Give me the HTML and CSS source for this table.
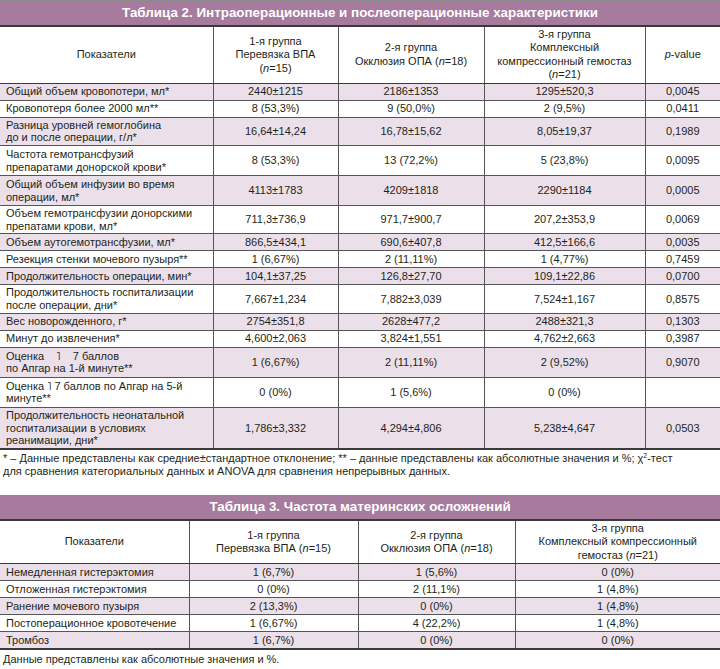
FILE: index.html
```html
<!DOCTYPE html>
<html lang="ru">
<head>
<meta charset="utf-8">
<title>Таблицы</title>
<link rel="stylesheet" href="styles.css">
</head>
<body>
<table class="tbl t2">
  <colgroup><col class="c1"><col class="c2"><col class="c3"><col class="c4"><col class="c5"></colgroup>
  <thead>
    <tr><th class="cap" colspan="5">Таблица 2. Интраоперационные и послеоперационные характеристики</th></tr>
    <tr class="head">
      <th>Показатели</th>
      <th>1-я группа<br>Перевязка ВПА<br>(<i>n</i>=15)</th>
      <th>2-я группа<br>Окклюзия ОПА (<i>n</i>=18)</th>
      <th>3-я группа<br>Комплексный<br>компрессионный гемостаз<br>(<i>n</i>=21)</th>
      <th><i>p</i>-value</th>
    </tr>
  </thead>
  <tbody>
    <tr class="s"><td>Общий объем кровопотери, мл*</td><td>2440±1215</td><td>2186±1353</td><td>1295±520,3</td><td>0,0045</td></tr>
    <tr><td>Кровопотеря более 2000 мл**</td><td>8 (53,3%)</td><td>9 (50,0%)</td><td>2 (9,5%)</td><td>0,0411</td></tr>
    <tr class="s d1"><td>Разница уровней гемоглобина<br>до и после операции, г/л*</td><td>16,64±14,24</td><td>16,78±15,62</td><td>8,05±19,37</td><td>0,1989</td></tr>
    <tr class="d2"><td>Частота гемотрансфузий<br>препаратами донорской крови*</td><td>8 (53,3%)</td><td>13 (72,2%)</td><td>5 (23,8%)</td><td>0,0095</td></tr>
    <tr class="s d2"><td>Общий объем инфузии во время<br>операции, мл*</td><td>4113±1783</td><td>4209±1818</td><td>2290±1184</td><td>0,0005</td></tr>
    <tr class="d1"><td>Объем гемотрансфузии донорскими<br>препатами крови, мл*</td><td>711,3±736,9</td><td>971,7±900,7</td><td>207,2±353,9</td><td>0,0069</td></tr>
    <tr class="s"><td>Объем аутогемотрансфузии, мл*</td><td>866,5±434,1</td><td>690,6±407,8</td><td>412,5±166,6</td><td>0,0035</td></tr>
    <tr><td>Резекция стенки мочевого пузыря**</td><td>1 (6,67%)</td><td>2 (11,11%)</td><td>1 (4,77%)</td><td>0,7459</td></tr>
    <tr class="s"><td>Продолжительность операции, мин*</td><td>104,1±37,25</td><td>126,8±27,70</td><td>109,1±22,86</td><td>0,0700</td></tr>
    <tr class="d1"><td>Продолжительность госпитализации<br>после операции, дни*</td><td>7,667±1,234</td><td>7,882±3,039</td><td>7,524±1,167</td><td>0,8575</td></tr>
    <tr class="s"><td>Вес новорожденного, г*</td><td>2754±351,8</td><td>2628±477,2</td><td>2488±321,3</td><td>0,1303</td></tr>
    <tr><td>Минут до извлечения*</td><td>4,600±2,063</td><td>3,824±1,551</td><td>4,762±2,663</td><td>0,3987</td></tr>
    <tr class="s d2"><td>Оценка&nbsp;&nbsp;&nbsp;&nbsp;˥&nbsp;&nbsp;&nbsp;&nbsp;7 баллов<br>по Апгар на 1-й минуте**</td><td>1 (6,67%)</td><td>2 (11,11%)</td><td>2 (9,52%)</td><td>0,9070</td></tr>
    <tr class="d2"><td>Оценка ˥ 7 баллов по Апгар на 5-й<br>минуте**</td><td>0 (0%)</td><td>1 (5,6%)</td><td>0 (0%)</td><td></td></tr>
    <tr class="s"><td>Продолжительность неонатальной<br>госпитализации в условиях<br>реанимации, дни*</td><td>1,786±3,332</td><td>4,294±4,806</td><td>5,238±4,647</td><td>0,0503</td></tr>
  </tbody>
</table>
<p class="note">* – Данные представлены как средние±стандартное отклонение; ** – данные представлены как абсолютные значения и %; χ<sup>2</sup>-тест<br>для сравнения категориальных данных и ANOVA для сравнения непрерывных данных.</p>

<table class="tbl t3">
  <colgroup><col class="k1"><col class="k2"><col class="k3"><col class="k4"></colgroup>
  <thead>
    <tr><th class="cap" colspan="4">Таблица 3. Частота материнских осложнений</th></tr>
    <tr class="head">
      <th>Показатели</th>
      <th>1-я группа<br>Перевязка ВПА (<i>n</i>=15)</th>
      <th>2-я группа<br>Окклюзия ОПА (<i>n</i>=18)</th>
      <th>3-я группа<br>Комплексный компрессионный<br>гемостаз (<i>n</i>=21)</th>
    </tr>
  </thead>
  <tbody>
    <tr class="s"><td>Немедленная гистерэктомия</td><td>1 (6,7%)</td><td>1 (5,6%)</td><td>0 (0%)</td></tr>
    <tr><td>Отложенная гистерэктомия</td><td>0 (0%)</td><td>2 (11,1%)</td><td>1 (4,8%)</td></tr>
    <tr class="s"><td>Ранение мочевого пузыря</td><td>2 (13,3%)</td><td>0 (0%)</td><td>1 (4,8%)</td></tr>
    <tr><td>Постоперационное кровотечение</td><td>1 (6,67%)</td><td>4 (22,2%)</td><td>1 (4,8%)</td></tr>
    <tr class="s"><td>Тромбоз</td><td>1 (6,7%)</td><td>0 (0%)</td><td>0 (0%)</td></tr>
  </tbody>
</table>
<p class="note">Данные представлены как абсолютные значения и %.</p>
</body>
</html>
```

FILE: styles.css
```css
html, body {
  margin: 0;
  padding: 0;
  background: #ffffff;
}
body {
  width: 720px;
  font-family: "Liberation Sans", Arial, sans-serif;
  font-size: 11px;
  color: #231f20;
}
.tbl {
  width: 720px;
  border-collapse: collapse;
  table-layout: fixed;
}
.t2 .c1 { width: 213px; }
.t2 .c2 { width: 125px; }
.t2 .c3 { width: 146px; }
.t2 .c4 { width: 161px; }
.t2 .c5 { width: 75px; }
.t3 .k1 { width: 189px; }
.t3 .k2 { width: 169px; }
.t3 .k3 { width: 157px; }
.t3 .k4 { width: 205px; }

.tbl th,
.tbl td {
  border: 1px solid #555456;
  padding: 1px 4px;
  line-height: 12.7px;
  text-align: center;
  vertical-align: middle;
  font-weight: normal;
}
.tbl td:first-child {
  text-align: left;
  padding-left: 6px;
  border-left: none;
}
.tbl th:first-child { border-left: none; }
.tbl td:last-child,
.tbl th:last-child { border-right: none; }

.tbl th.cap {
  background: #a67b9e;
  color: #ffffff;
  font-weight: bold;
  font-size: 13.4px;
  height: 24px;
  padding: 0;
  border-top: 1px solid #8c8c8c;
  border-bottom: 2px solid #3a3a3a;
  border-left: none;
  border-right: none;
}
.t3 th.cap { height: 23px; }
.tbl .head th {
  line-height: 13.4px;
  padding: 1px 4px;
  border-bottom: 1px solid #3a3a3a;
}
.t2 .head th { height: 53px; }
.t3 .head th { height: 40px; }

.tbl tr.s td { background: #ebe0ea; }
.t2 tbody td { height: 14px; }
.t2 tr.d1 td { height: 24px; }
.t2 tr.d2 td { height: 27px; }
.t3 tbody td { height: 14px; }
.tbl tbody tr:last-child td { border-bottom: 2px solid #3a3a3a; }

.note {
  margin: 2px 0 0;
  padding-left: 3px;
  line-height: 13.5px;
}
.note sup {
  font-size: 7px;
  line-height: 0;
  vertical-align: 4px;
}
.t3 { margin-top: 16px; }
.t3 + .note { margin-top: 3px; }
```
